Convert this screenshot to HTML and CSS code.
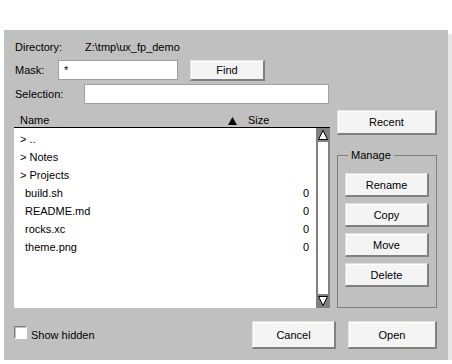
FILE: index.html
```html
<!DOCTYPE html>
<html>
<head>
<meta charset="utf-8">
<link rel="stylesheet" href="styles.css">
</head>
<body>
<div class="screen">
  <div class="dialog">
    <div class="row dir"><span class="lbl lbl-dir">Directory:</span><span>Z:\tmp\ux_fp_demo</span></div>
    <div class="row mask">
      <span class="lbl lbl-mask">Mask:</span>
      <div class="input input-mask">*</div>
      <button class="btn btn-find">Find</button>
    </div>
    <div class="row sel">
      <span class="lbl lbl-sel">Selection:</span>
      <div class="input input-sel"></div>
    </div>
    <div class="main">
      <div class="files">
        <div class="header">
          <span class="h-name">Name</span>
          <span class="h-arrow"><svg width="9" height="8" viewBox="0 0 9 8"><polygon points="4.5,0 9,8 0,8" fill="#000"/></svg></span>
          <span class="h-size">Size</span>
        </div>
        <div class="listwrap">
          <div class="list">
            <div class="item dirent"><span class="nm">&gt; ..</span></div>
            <div class="item dirent"><span class="nm">&gt; Notes</span></div>
            <div class="item dirent"><span class="nm">&gt; Projects</span></div>
            <div class="item file"><span class="nm">build.sh</span><span class="sz">0</span></div>
            <div class="item file"><span class="nm">README.md</span><span class="sz">0</span></div>
            <div class="item file"><span class="nm">rocks.xc</span><span class="sz">0</span></div>
            <div class="item file"><span class="nm">theme.png</span><span class="sz">0</span></div>
          </div>
          <div class="scrollbar">
            <div class="sb-btn"><svg width="10" height="10" viewBox="0 0 10 10"><polygon points="5,0.5 9.5,9.5 0.5,9.5" fill="#fff" stroke="#000" stroke-width="1"/></svg></div>
            <div class="sb-track"></div>
            <div class="sb-btn"><svg width="10" height="10" viewBox="0 0 10 10"><polygon points="0.5,0.5 9.5,0.5 5,9.5" fill="#fff" stroke="#000" stroke-width="1"/></svg></div>
          </div>
        </div>
      </div>
      <div class="side">
        <button class="btn btn-recent">Recent</button>
        <fieldset class="manage">
          <legend>Manage</legend>
          <button class="btn btn-tool">Rename</button>
          <button class="btn btn-tool">Copy</button>
          <button class="btn btn-tool">Move</button>
          <button class="btn btn-tool">Delete</button>
        </fieldset>
      </div>
    </div>
    <div class="bottom">
      <label class="check"><span class="box"></span>Show hidden</label>
      <button class="btn btn-cancel">Cancel</button>
      <button class="btn btn-open">Open</button>
    </div>
  </div>
</div>
</body>
</html>
```

FILE: styles.css
```css
body {
  margin: 0;
  background: #ffffff;
  font-family: "Liberation Sans", Arial, sans-serif;
  font-size: 11px;
  color: #000;
}

.screen {
  padding: 30px 0 0 4px;
}

.dialog {
  width: 444px;
  height: 330px;
  box-sizing: border-box;
  background: #c0c0c0;
  box-shadow: 4px 4px 0 #e8e8e8;
  padding: 8px 11px 11px 10px;
  display: flex;
  flex-direction: column;
}

.row {
  display: flex;
  align-items: center;
  padding-left: 1px;
}

.dir {
  height: 18px;
}

.lbl-dir { width: 70px; }

.mask {
  margin-top: 4px;
  height: 21px;
  align-items: flex-start;
}

.mask .lbl { line-height: 20px; }

.lbl-mask { width: 43px; }

.input {
  height: 20px;
  box-sizing: border-box;
  border: 1px solid #a0a0a0;
  background: #fff;
  line-height: 18px;
}

.input-mask {
  width: 120px;
  padding-left: 5px;
}

.sel {
  margin-top: 3px;
  height: 20px;
}

.lbl-sel { width: 69px; }

.input-sel { width: 245px; }

.btn {
  font-family: "Liberation Sans", Arial, sans-serif;
  font-size: 11px;
  color: #000;
  background: #f4f4f4;
  box-sizing: border-box;
  padding: 0;
  margin: 0;
  border-style: solid;
  border-width: 1px 2px 2px 1px;
  border-color: #e0e0e0 #808080 #808080 #e0e0e0;
  box-shadow: inset 1px 1px 0 #ffffff;
}

.btn-find {
  margin-left: 12px;
  width: 75px;
  height: 21px;
}

.main {
  margin-top: 6px;
  display: flex;
  gap: 7px;
  height: 198px;
}

.files {
  width: 316px;
  display: flex;
  flex-direction: column;
}

.header {
  height: 17px;
  border-bottom: 1px solid #000;
  display: flex;
  align-items: flex-end;
  line-height: 13px;
}

.h-name {
  flex: 1;
  padding-left: 6px;
}

.h-arrow {
  width: 20px;
  display: flex;
  align-items: center;
  height: 13px;
}

.h-size { width: 82px; }

.listwrap {
  display: flex;
  height: 180px;
}

.list {
  flex: 1;
  background: #fff;
  padding-top: 2px;
}

.item {
  height: 18px;
  display: flex;
  align-items: center;
}

.nm { flex: 1; }

.dirent .nm { padding-left: 6px; }

.file .nm { padding-left: 11px; }

.sz {
  padding-right: 7px;
}

.scrollbar {
  width: 14px;
  box-sizing: border-box;
  background: #808080;
  padding: 0 2px;
  display: flex;
  flex-direction: column;
}

.sb-btn {
  height: 14px;
  display: flex;
  align-items: center;
  justify-content: center;
}

.sb-track {
  flex: 1;
  background: #fff;
}

.side {
  width: 100px;
  display: flex;
  flex-direction: column;
}

.btn-recent {
  width: 100px;
  height: 25px;
}

.manage {
  flex: 1;
  margin: 14px 0 0 0;
  border: 1px solid #808080;
  padding: 11px 0 0 7px;
  display: flex;
  flex-direction: column;
  gap: 6px;
  min-width: 0;
}

.manage legend {
  margin-left: 3px;
  padding: 0 3px;
  line-height: 13px;
}

.btn-tool {
  width: 84px;
  height: 24px;
}

.bottom {
  margin-top: 13px;
  height: 28px;
  display: flex;
  align-items: center;
}

.check {
  display: flex;
  align-items: center;
  margin-right: auto;
}

.box {
  width: 13px;
  height: 13px;
  box-sizing: border-box;
  background: #fff;
  border-style: solid;
  border-width: 1px;
  border-color: #808080 #ffffff #ffffff #808080;
  box-shadow: inset 1px 1px 0 #c0c0c0;
  margin-right: 4px;
  margin-bottom: 5px;
}

.btn-cancel {
  width: 84px;
  height: 28px;
}

.btn-open {
  margin-left: 12px;
  width: 89px;
  height: 28px;
}
```
